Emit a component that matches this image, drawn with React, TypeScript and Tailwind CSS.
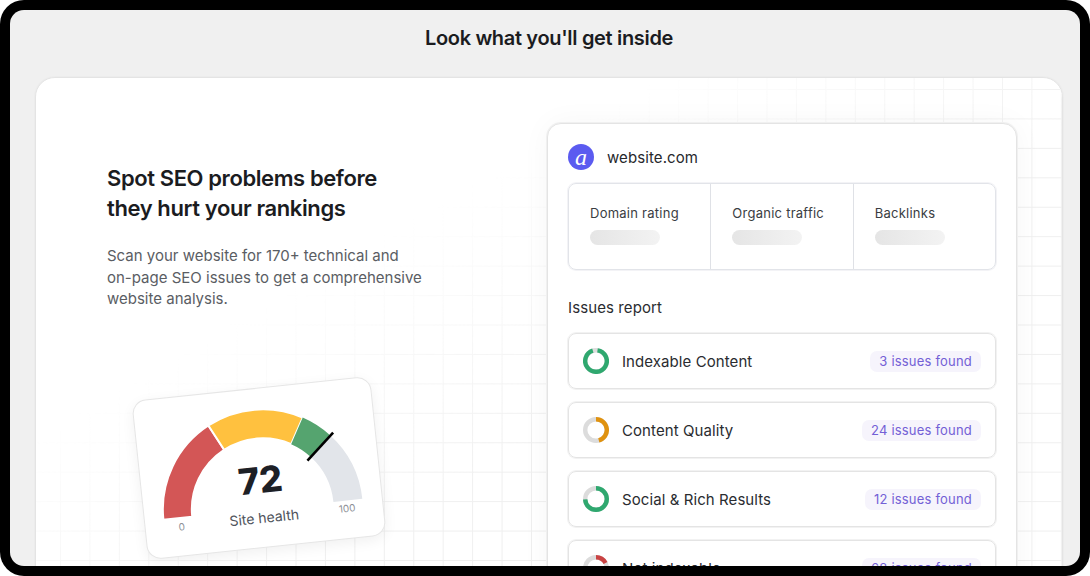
const issues = [
  { name: 'Indexable Content', badge: '3 issues found', color: '#2fa86f', start: 8, sweep: 335 },
  { name: 'Content Quality', badge: '24 issues found', color: '#e0920f', start: 0, sweep: 165 },
  { name: 'Social & Rich Results', badge: '12 issues found', color: '#2fa86f', start: 0, sweep: 268 },
  { name: 'Not indexable', badge: '68 issues found', color: '#c94343', start: 0, sweep: 62 },
]

const stats = ['Domain rating', 'Organic traffic', 'Backlinks']

const polar = (cx: number, cy: number, r: number, deg: number) => {
  const a = ((deg - 90) * Math.PI) / 180
  return [cx + r * Math.cos(a), cy + r * Math.sin(a)]
}

const Ring = ({ color, start, sweep }: { color: string; start: number; sweep: number }) => {
  const [x1, y1] = polar(13, 13, 10.8, start)
  const [x2, y2] = polar(13, 13, 10.8, start + sweep)
  return (
    <svg width="26" height="26" viewBox="0 0 26 26" className="shrink-0">
      <circle cx="13" cy="13" r="10.8" fill="none" stroke="#dcdcdc" strokeWidth="4.4" />
      <path
        d={`M${x1} ${y1}A10.8 10.8 0 ${sweep > 180 ? 1 : 0} 1 ${x2} ${y2}`}
        fill="none"
        stroke={color}
        strokeWidth="4.4"
      />
    </svg>
  )
}

// angle is measured from the left end of the gauge, clockwise, 0-180
const arc = (from: number, to: number) => {
  const cx = 119.5
  const cy = 121.5
  const R = 100
  const r = 71
  const [ax, ay] = polar(cx, cy, R, from - 90)
  const [bx, by] = polar(cx, cy, R, to - 90)
  const [cx2, cy2] = polar(cx, cy, r, to - 90)
  const [dx, dy] = polar(cx, cy, r, from - 90)
  return `M${ax} ${ay}A${R} ${R} 0 0 1 ${bx} ${by}L${cx2} ${cy2}A${r} ${r} 0 0 0 ${dx} ${dy}Z`
}

const Gauge = () => {
  const [n1x, n1y] = polar(119.5, 121.5, 104, 138.5 - 90)
  const [n2x, n2y] = polar(119.5, 121.5, 66, 138.5 - 90)
  return (
    <div className="relative mt-[78px] ml-[32px] h-[160px] w-[240px] -rotate-6 rounded-[14px] border border-[#e6e6e6] bg-white shadow-[0_4px_14px_rgba(0,0,0,0.06)]">
      <svg width="240" height="160" viewBox="0 0 240 160" className="absolute -top-px -left-px">
        <path d={arc(0, 63)} fill="#d35656" stroke="#fff" strokeWidth="2" />
        <path d={arc(63, 119.5)} fill="#ffc13f" stroke="#fff" strokeWidth="2" />
        <path d={arc(119.5, 138.5)} fill="#55a46f" />
        <path d={arc(138.5, 180)} fill="#e2e5ea" />
        <line x1={n1x} y1={n1y} x2={n2x} y2={n2y} stroke="#000" strokeWidth="2.6" />
      </svg>
      <span className="absolute top-[69px] left-0 w-[238px] text-center text-[36px] leading-[44px] font-extrabold text-[#1d2026]">
        72
      </span>
      <span className="absolute top-[119px] left-0 w-[238px] text-center text-[14px] leading-[20px] text-[#50545c]">
        Site health
      </span>
      <span className="absolute top-[122px] left-[33px] text-[10px] leading-[14px] text-[#8d9097]">0</span>
      <span className="absolute top-[121px] left-[194px] text-[10px] leading-[14px] text-[#8d9097]">100</span>
    </div>
  )
}

export default function App() {
  return (
    <div className="h-[576px] w-[1090px] bg-white font-[Inter,sans-serif]">
      <div className="h-full w-full overflow-hidden rounded-[24px] bg-black p-[10px]">
        <div className="h-full w-full overflow-hidden rounded-[14px] bg-[#f0f0f0] pt-px pr-[17px] pl-[25px]">
          <h1 className="h-[66px] pt-[13px] text-center text-[20px] leading-[28px] font-semibold tracking-[-0.33px] text-[#1b1c1f]">
            Look what you'll get inside
          </h1>

          <div className="relative flex h-[600px] rounded-t-[20px] border border-[#e4e4e4] bg-white pt-[45px] pl-[71px] shadow-[0_0_0_1px_#ececec]">
            {/* grid behind everything */}
            <div className="absolute inset-0 overflow-hidden rounded-t-[20px] bg-[linear-gradient(#efefef_1px,transparent_1px),linear-gradient(90deg,#efefef_1px,transparent_1px)] bg-[size:29.45px_29.45px] bg-[position:24px_11px] [mask-image:linear-gradient(to_bottom_right,transparent_30%,black_55%)]" />

            <div className="relative w-[440px] shrink-0">
              <h2 className="mt-[40px] text-[22px] leading-[30px] font-semibold tracking-[-0.4px] text-[#1b1c1f]">
                Spot SEO problems before
                <br />
                they hurt your rankings
              </h2>
              <p className="mt-[22px] text-[15px] leading-[21.5px] text-[#5a5d63]">
                Scan your website for 170+ technical and
                <br />
                on-page SEO issues to get a comprehensive
                <br />
                website analysis.
              </p>
              <Gauge />
            </div>

            <div className="relative h-[520px] w-[470px] shrink-0 rounded-[14px] border border-[#e4e4e4] bg-white px-[20px] pt-[20px] shadow-[0_0_0_1px_#f0f0f0,0_0_30px_rgba(0,0,0,0.04)]">
              <div className="flex h-[26px] items-center gap-[13px]">
                <div className="flex h-[26px] w-[26px] items-center justify-center rounded-full bg-[#5b5bf0]">
                  <span className="font-['Liberation_Serif',serif] text-[24px] leading-[22px] text-white italic">a</span>
                </div>
                <span className="pt-[2px] text-[15px] tracking-[0.1px] text-[#26282c]">website.com</span>
              </div>

              <div className="mt-[13px] flex h-[87px] rounded-[8px] border border-[#e2e4e9] shadow-[0_0_0_1px_#f3f3f6]">
                {stats.map((s, i) => (
                  <div key={s} className={`flex-1 pt-[20px] pl-[21px] ${i > 0 ? 'border-l border-[#dfe1e6]' : ''}`}>
                    <p className="text-[13px] leading-[18px] tracking-[0.25px] text-[#3a3d42]">{s}</p>
                    <div className="mt-[8px] h-[15px] w-[70px] rounded-full bg-gradient-to-r from-[#e5e5e5] to-[#f3f3f3]" />
                  </div>
                ))}
              </div>

              <p className="mt-[28px] text-[15px] leading-[20px] tracking-[0.1px] text-[#2a2c30]">Issues report</p>

              <div className="mt-[15px] flex flex-col gap-[13px]">
                {issues.map((it) => (
                  <div
                    key={it.name}
                    className="flex h-[56px] items-center justify-between rounded-[8px] border border-[#e4e4e4] px-[14px] shadow-[0_0_0_1px_#f2f2f2]"
                  >
                    <div className="flex items-center gap-[13px]">
                      <Ring color={it.color} start={it.start} sweep={it.sweep} />
                      <span className="pt-[2px] text-[15px] tracking-[0.08px] text-[#2a2c30]">{it.name}</span>
                    </div>
                    <span className="rounded-[7px] bg-[#f6f4fc] px-[9px] py-[2px] text-[13px] leading-[17px] tracking-[0.2px] text-[#7360d6]">
                      {it.badge}
                    </span>
                  </div>
                ))}
              </div>
            </div>
          </div>
        </div>
      </div>
    </div>
  )
}
